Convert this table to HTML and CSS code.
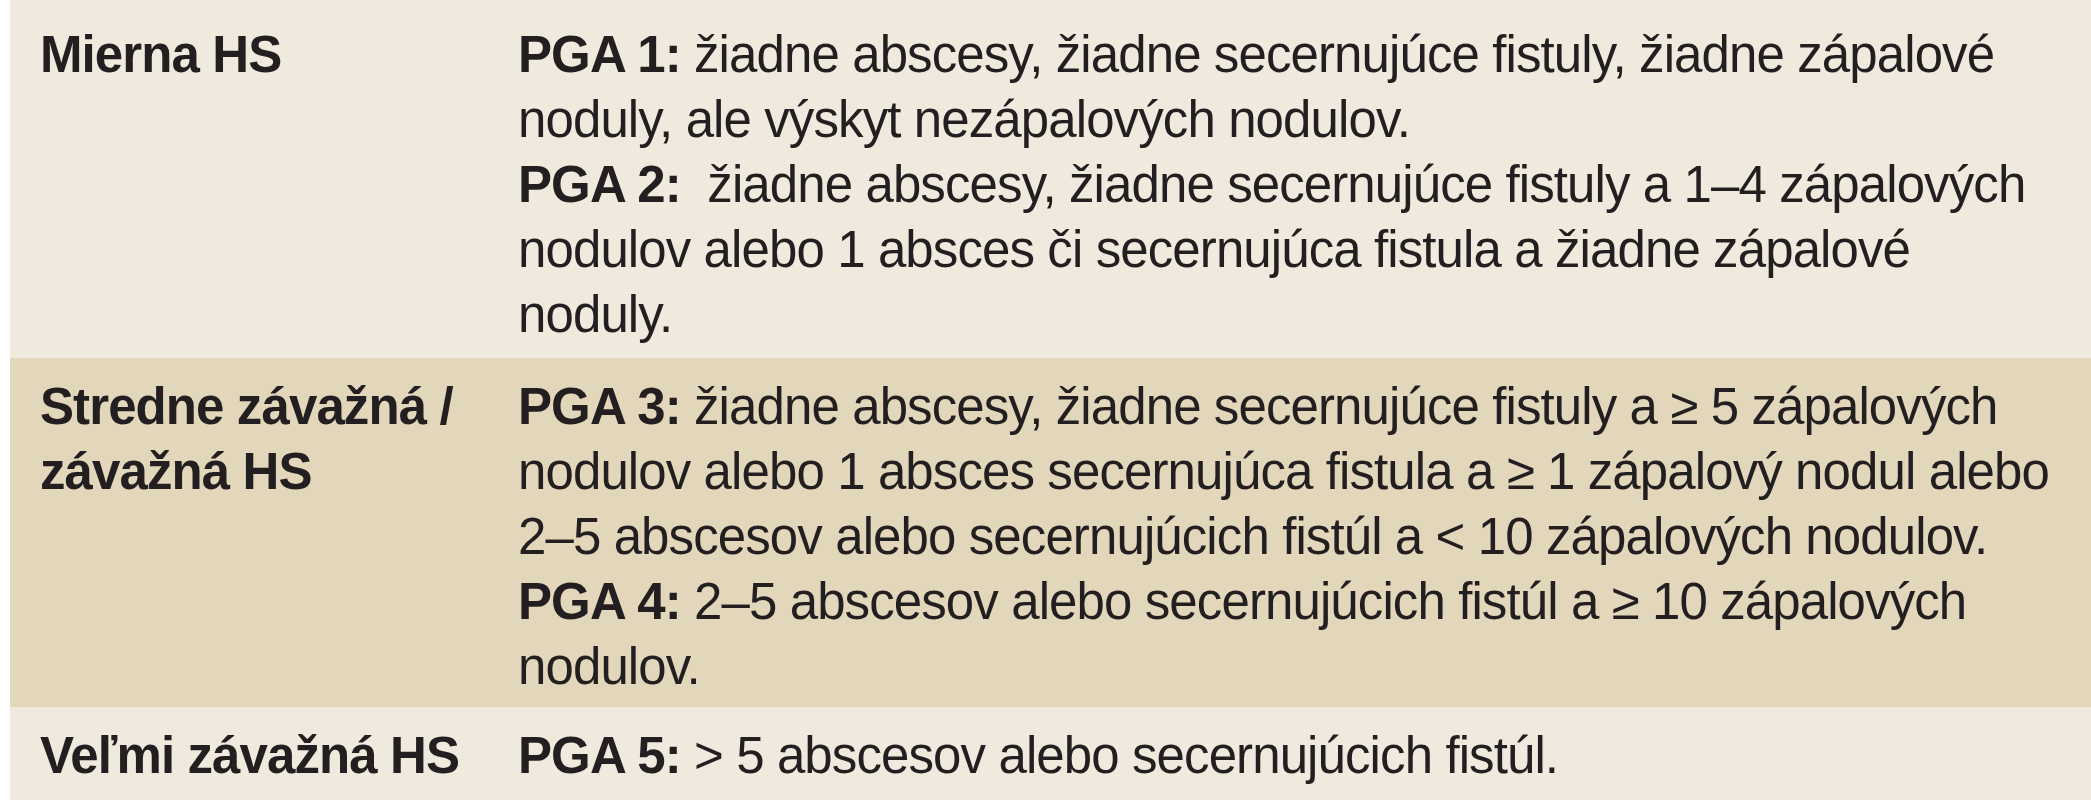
FILE: index.html
```html
<!DOCTYPE html>
<html lang="sk">
<head>
<meta charset="utf-8">
<title>HS – PGA</title>
<link rel="stylesheet" href="styles.css">
</head>
<body>
<div class="table">
  <div class="row row-first">
    <div class="label">Mierna HS</div>
    <div class="desc">
      <div class="line"><b>PGA 1:</b> žiadne abscesy, žiadne secernujúce fistuly, žiadne zápalové</div>
      <div class="line">noduly, ale výskyt nezápalových nodulov.</div>
      <div class="line"><b>PGA 2:</b>&nbsp; žiadne abscesy, žiadne secernujúce fistuly a 1–4 zápalových</div>
      <div class="line">nodulov alebo 1 absces či secernujúca fistula a žiadne zápalové</div>
      <div class="line">noduly.</div>
    </div>
  </div>
  <div class="row row-dark">
    <div class="label"><div class="line">Stredne závažná /</div><div class="line">závažná HS</div></div>
    <div class="desc">
      <div class="line"><b>PGA 3:</b> žiadne abscesy, žiadne secernujúce fistuly a ≥ 5 zápalových</div>
      <div class="line">nodulov alebo 1 absces secernujúca fistula a ≥ 1 zápalový nodul alebo</div>
      <div class="line">2–5 abscesov alebo secernujúcich fistúl a &lt; 10 zápalových nodulov.</div>
      <div class="line"><b>PGA 4:</b> 2–5 abscesov alebo secernujúcich fistúl a ≥ 10 zápalových</div>
      <div class="line">nodulov.</div>
    </div>
  </div>
  <div class="row row-last">
    <div class="label">Veľmi závažná HS</div>
    <div class="desc">
      <div class="line"><b>PGA 5:</b> &gt; 5 abscesov alebo secernujúcich fistúl.</div>
    </div>
  </div>
</div>
</body>
</html>
```
FILE: styles.css
```css
html, body {
  margin: 0;
  padding: 0;
  background: #ffffff;
}

body {
  font-family: "Liberation Sans", Arial, sans-serif;
  font-size: 51px;
  letter-spacing: -0.9px;
  line-height: 65px;
  color: #231f20;
  overflow: hidden;
}

.table {
  margin-left: 10px;
  display: flex;
  flex-direction: column;
}

.row {
  display: grid;
  grid-template-columns: 478px 1fr;
  padding-left: 30px;
  background: #f0e9de;
}

.row-first {
  padding-top: 22px;
  padding-bottom: 11px;
}

.row-dark {
  background: #e2d6bb;
  padding-top: 16px;
  padding-bottom: 8px;
}

.row-last {
  padding-top: 16px;
  padding-bottom: 40px;
}

.label {
  font-weight: bold;
  white-space: nowrap;
}

.line {
  white-space: nowrap;
}

.desc b {
  font-weight: bold;
}
```
